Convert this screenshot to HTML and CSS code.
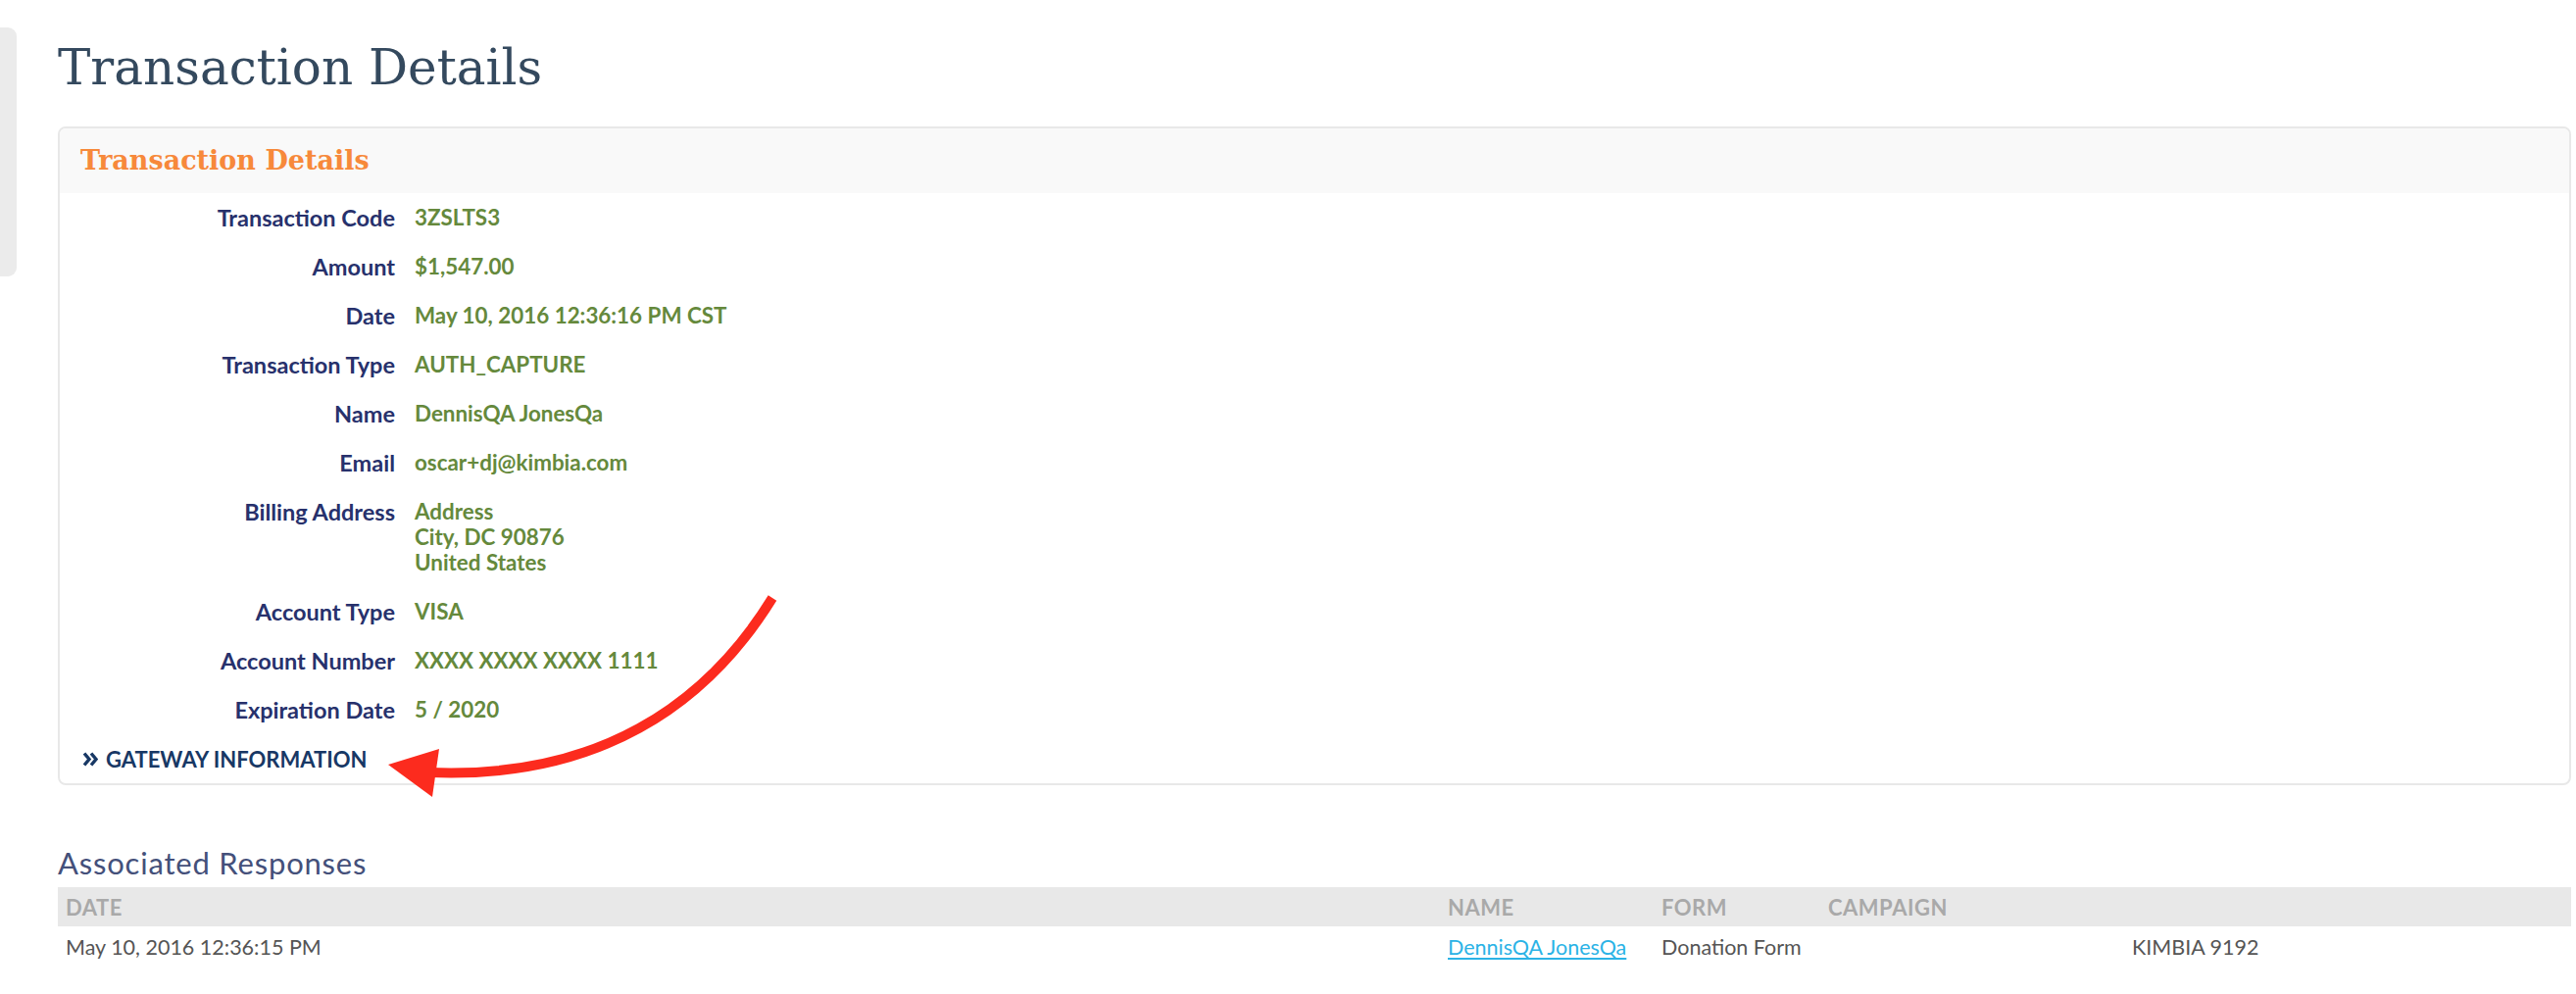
FILE: index.html
```html
<!DOCTYPE html>
<html lang="en">
<head>
    <meta charset="UTF-8">
    <meta name="viewport" content="width=device-width, initial-scale=1.0">
    <title>Transaction Details</title>
    <link rel="stylesheet" href="styles.css">
</head>
<body>
    <div class="page">
        <aside class="side-tab"></aside>

        <main class="content">
            <h1 class="page-title">Transaction Details</h1>

            <section class="panel">
                <div class="panel-heading">
                    <h2>Transaction Details</h2>
                </div>

                <dl class="details">
                    <dt>Transaction Code</dt>
                    <dd>3ZSLTS3</dd>

                    <dt>Amount</dt>
                    <dd>$1,547.00</dd>

                    <dt>Date</dt>
                    <dd>May 10, 2016 12:36:16 PM CST</dd>

                    <dt>Transaction Type</dt>
                    <dd>AUTH_CAPTURE</dd>

                    <dt>Name</dt>
                    <dd>DennisQA JonesQa</dd>

                    <dt>Email</dt>
                    <dd>oscar+dj@kimbia.com</dd>

                    <dt>Billing Address</dt>
                    <dd>Address<br>City, DC 90876<br>United States</dd>

                    <dt>Account Type</dt>
                    <dd>VISA</dd>

                    <dt>Account Number</dt>
                    <dd>XXXX XXXX XXXX 1111</dd>

                    <dt>Expiration Date</dt>
                    <dd>5 / 2020</dd>
                </dl>

                <a class="toggle" href="#gateway">
                    <svg class="chevrons" width="16" height="15" viewBox="0 0 16 15">
                        <path d="M2 1.5 L7 7.5 L2 13.5 M9 1.5 L14 7.5 L9 13.5" fill="none" stroke="currentColor" stroke-width="3.4"/>
                    </svg>
                    GATEWAY INFORMATION
                </a>
            </section>

            <h3 class="section-title">Associated Responses</h3>

            <table class="responses">
                <colgroup>
                    <col class="col-date">
                    <col class="col-name">
                    <col class="col-form">
                    <col class="col-campaign">
                    <col>
                </colgroup>
                <thead>
                    <tr>
                        <th>Date</th>
                        <th>Name</th>
                        <th>Form</th>
                        <th>Campaign</th>
                        <th></th>
                    </tr>
                </thead>
                <tbody>
                    <tr>
                        <td>May 10, 2016 12:36:15 PM</td>
                        <td><a href="#donor">DennisQA JonesQa</a></td>
                        <td>Donation Form</td>
                        <td></td>
                        <td>KIMBIA 9192</td>
                    </tr>
                </tbody>
            </table>
        </main>
    </div>

    <!-- red callout pointing at the gateway toggle -->
    <svg class="callout" width="420" height="230" viewBox="0 0 420 230">
        <path d="M408 10 C340 120 230 195 58 188" fill="none" stroke="#fc2b1e" stroke-width="10"/>
        <polygon points="16,180 68,164 61,213" fill="#fc2b1e"/>
    </svg>
</body>
</html>
```

FILE: styles.css
```css
* {
    margin: 0;
    padding: 0;
    box-sizing: border-box;
}

body {
    font-family: Lato, "Open Sans", sans-serif;
    background: #fff;
    color: #555;
    position: relative;
}

.page {
    display: flex;
    align-items: flex-start;
}

.side-tab {
    width: 17px;
    height: 254px;
    margin-top: 28px;
    background: #ebebeb;
    border-radius: 0 9px 9px 0;
    flex-shrink: 0;
}

.content {
    flex: 1;
    padding: 0 5px 0 42px;
}

.page-title {
    font-family: "DejaVu Serif", "Liberation Serif", serif;
    font-weight: normal;
    font-size: 50px;
    line-height: 56px;
    color: #34495e;
    margin-top: 41px;
    margin-bottom: 32px;
}

/* panel */

.panel {
    border: 2px solid #e8e8e8;
    border-radius: 8px;
    background: #fff;
    overflow: hidden;
}

.panel-heading {
    background: #f9f9f9;
    padding: 15px 21px;
}

.panel-heading h2 {
    font-family: "DejaVu Serif", "Liberation Serif", serif;
    font-weight: bold;
    font-size: 27px;
    line-height: 36px;
    color: #f7893b;
}

.details {
    display: grid;
    grid-template-columns: 342px 1fr;
    column-gap: 20px;
    font-weight: bold;
    line-height: 26px;
}

.details dt,
.details dd {
    padding: 12px 0;
}

.details dt {
    text-align: right;
    font-size: 23.5px;
    color: #27316c;
}

.details dd {
    font-size: 22.4px;
    color: #65893c;
}

.toggle {
    display: flex;
    align-items: center;
    gap: 8px;
    padding: 13px 21px 11px 23px;
    font-weight: bold;
    font-size: 22px;
    line-height: 26px;
    color: #183865;
    text-decoration: none;
}

.chevrons {
    margin-top: -2px;
}

/* responses table */

.section-title {
    font-weight: normal;
    font-size: 31px;
    letter-spacing: 0.8px;
    line-height: 36px;
    color: #44507a;
    margin-top: 61px;
    margin-bottom: 7px;
}

.responses {
    width: 100%;
    border-collapse: collapse;
    table-layout: fixed;
    font-size: 21.5px;
}

.col-date { width: 1410px; }
.col-name { width: 218px; }
.col-form { width: 170px; }
.col-campaign { width: 310px; }

.responses th {
    background: #e8e8e8;
    color: #a9a9a9;
    font-size: 22px;
    letter-spacing: 0.5px;
    font-weight: bold;
    text-transform: uppercase;
    text-align: left;
    height: 40px;
    padding: 0 8px;
}

.responses td {
    height: 42px;
    padding: 0 8px;
    color: #555;
    white-space: nowrap;
}

.responses td a {
    color: #2bb3e6;
    text-decoration: underline;
    text-decoration-thickness: 2px;
    text-underline-offset: 3px;
}

.callout {
    position: absolute;
    left: 380px;
    top: 600px;
}
```
